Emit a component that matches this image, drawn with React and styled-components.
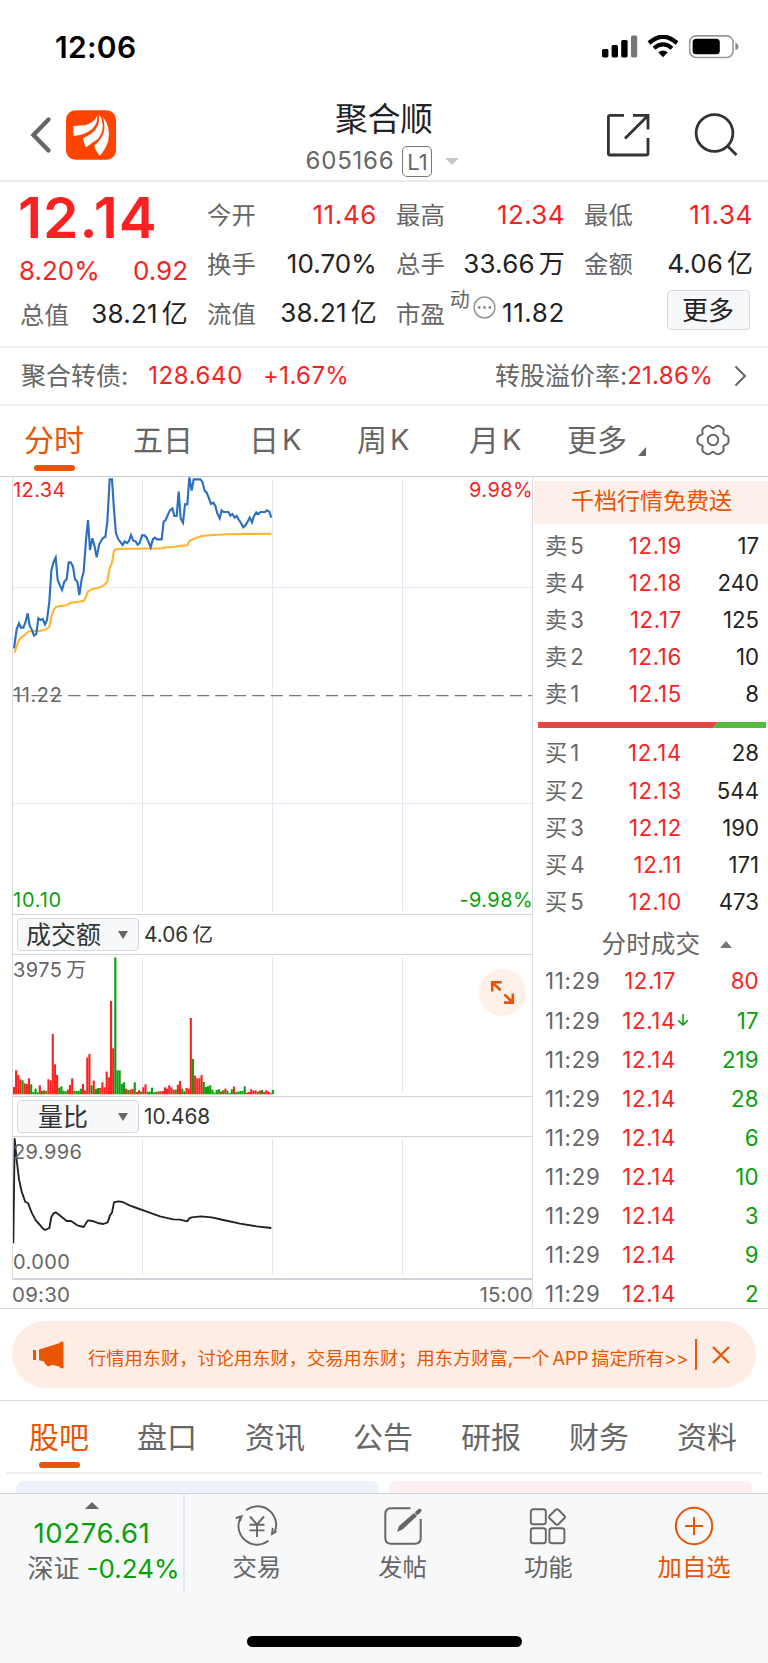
import React from "react";
import styled, { createGlobalStyle } from "styled-components";

const RED = "#f92222";
const GREEN = "#0a9f0a";
const ORANGE = "#ea5504";
const GREY = "#666666";
const DARK = "#222222";
const LINE = "#dadee5";

const GlobalStyle = createGlobalStyle`
  *, *::before, *::after { box-sizing: border-box; }
  body {
    margin: 0;
    background: #fff;
    color: ${DARK};
    font-family: Inter, "Noto Sans CJK SC", sans-serif;
    font-size: 24px;
    white-space: nowrap;
  }
  svg { display: block; flex: none; }
`;

const Screen = styled.div`
  width: 768px;
  height: 1663px;
  overflow: hidden;
  display: flex;
  flex-direction: column;
`;

/* ---------- status bar & header ---------- */

const StatusBar = styled.div`
  height: 94px;
  flex: none;
  display: flex;
  align-items: center;
  padding: 0 29px 0 55px;
`;

const Clock = styled.div`
  flex: 1;
  font-size: 30px;
  font-weight: 600;
  line-height: 40px;
  letter-spacing: 0.3px;
  color: #000;
`;

const Header = styled.header`
  height: 88px;
  flex: none;
  display: grid;
  grid-template-columns: 1fr auto 1fr;
  border-bottom: 2px solid #ebebeb;
`;

const HeaderLeft = styled.div`
  display: flex;
  gap: 14px;
  padding: 16px 0 0 29px;
`;

const HeaderRight = styled.div`
  display: flex;
  justify-content: flex-end;
  gap: 44px;
  padding: 18.6px 30.5px 0 0;
`;

const TitleBlock = styled.div`
  display: flex;
  flex-direction: column;
  align-items: center;
`;

const Title = styled.div`
  height: 48px;
  font-size: 32.7px;
  line-height: 50px;
`;

const CodeRow = styled.div`
  display: flex;
  align-items: center;
  height: 38px;
  padding-right: 3px;
  color: ${GREY};
  line-height: 38px;
  letter-spacing: 0.8px;
`;

const LevelBadge = styled.span`
  width: 30px;
  height: 31px;
  margin: 0 13px 0 8px;
  border: 1px solid #777;
  border-radius: 5px;
  font-size: 22px;
  line-height: 30px;
  letter-spacing: 0;
  text-align: center;
`;

/* ---------- quote ---------- */

const Quote = styled.section`
  height: 166px;
  flex: none;
  display: grid;
  grid-template-columns: 167px 169px 168px 168px;
  column-gap: 20px;
  padding: 8px 0 0 20px;
  border-bottom: 2px solid #efefef;
`;

const QuoteColumn = styled.div`
  display: flex;
  flex-direction: column;
`;

const Price = styled.div`
  height: 58px;
  margin-left: -2px;
  line-height: 55px;
  font-size: 57px;
  font-weight: 600;
  letter-spacing: 1px;
  color: ${RED};
`;

const Change = styled.div`
  height: 46px;
  line-height: 46px;
  display: flex;
  justify-content: space-between;
  margin: 0 -1px;
  font-size: 26px;
  color: ${RED};
`;

const Stat = styled.div`
  height: ${(p) => p.$height || 49.3}px;
  display: flex;
  align-items: center;
  justify-content: space-between;
`;

const StatLabel = styled.span`
  display: flex;
  align-items: center;
  padding-top: 1px;
  font-size: 24.4px;
  line-height: 36px;
  color: ${GREY};
`;

const StatValue = styled.span`
  display: flex;
  gap: ${(p) => p.$gap || 0}px;
  margin-right: -1px;
  font-size: 26px;
  line-height: 36px;
  letter-spacing: ${(p) => p.$ls || 0}px;
  color: ${(p) => (p.$red ? RED : DARK)};
`;

const Superscript = styled.sup`
  margin: -27px 3px 0 5px;
  font-size: 20px;
  line-height: 22px;
`;

const RaisedIcon = styled.span`
  margin-top: -12px;
`;

const MoreButton = styled.button`
  width: 83px;
  height: 40px;
  margin: 1px 2px 0 auto;
  padding: 0 1px 0 0;
  border: 1px solid #d5dae2;
  border-radius: 4px;
  background: #f7f8fa;
  color: ${DARK};
  font: inherit;
  font-size: 26px;
  line-height: 39px;
`;

const BondRow = styled.section`
  height: 58px;
  flex: none;
  display: flex;
  align-items: center;
  padding: 0 21px 0 21px;
  border-bottom: 2px solid #efefef;
  font-size: 25px;
  line-height: 36px;
  color: ${GREY};
`;

const BondValue = styled.span`
  color: ${RED};
  font-size: 24px;
  letter-spacing: ${(p) => p.$ls}px;
  margin-left: ${(p) => p.$ml || 0}px;
  margin-right: ${(p) => p.$mr || 0}px;
`;

const Spacer = styled.span`
  flex: 1;
`;

/* ---------- tabs ---------- */

const ChartTabs = styled.nav`
  height: 71px;
  flex: none;
  display: flex;
  border-bottom: 1px solid #c9ced6;
  padding-left: 24px;
`;

const Tab = styled.div`
  width: ${(p) => p.$width}px;
  height: 100%;
  flex: none;
  display: flex;
  flex-direction: column;
  align-items: flex-start;
  font-size: 30px;
  line-height: 68px;
  color: ${(p) => (p.$active ? ORANGE : GREY)};
  &::after {
    content: "";
    display: ${(p) => (p.$active ? "block" : "none")};
    width: 41px;
    height: 6px;
    margin: -9px 0 0 10px;
    border-radius: 3px;
    background: ${ORANGE};
  }
`;

const TabText = styled.span`
  display: flex;
  align-items: center;
  gap: 3px;
`;

const TabLetter = styled.span`
  font-size: 29px;
`;

const CornerMark = styled.span`
  margin: 22px 0 0 8px;
`;

const GearBox = styled.div`
  padding-top: 17px;
`;

/* ---------- charts ---------- */

const Market = styled.section`
  height: 832px;
  flex: none;
  display: flex;
  border-bottom: 1px solid ${LINE};
`;

const Charts = styled.div`
  width: 533px;
  padding-left: 12px;
  border-right: 1px solid ${LINE};
`;

const Panel = styled.div`
  position: relative;
  height: ${(p) => p.$height}px;
  border-left: 1px solid ${LINE};
  border-bottom: ${(p) => p.$rule || 1}px solid #cfd4db;
`;

const AxisLabel = styled.span`
  position: absolute;
  ${(p) => (p.$right ? "right: -1px" : "left: 0")};
  top: ${(p) => p.$top}px;
  font-size: 20px;
  line-height: 24px;
  letter-spacing: ${(p) => p.$ls || 0.4}px;
  color: ${(p) => p.$color || GREY};
`;

const PanelBar = styled.div`
  height: ${(p) => p.$height}px;
  display: flex;
  align-items: center;
  gap: 5px;
  padding-left: 4px;
  border-bottom: 1px solid #cfd4db;
  border-left: 1px solid ${LINE};
  font-size: 20.8px;
  line-height: 30px;
  color: #333;
`;

const Select = styled.div`
  width: 122px;
  height: 33px;
  display: flex;
  align-items: center;
  justify-content: space-between;
  padding: 0 10px 0 ${(p) => p.$indent}px;
  border: 1px solid #d5dae2;
  border-radius: 4px;
  background: #f7f8fa;
  font-size: 25px;
  line-height: 30px;
`;

const ValueWithUnit = styled.span`
  display: flex;
  gap: 4px;
`;

const Expand = styled.button`
  position: absolute;
  right: 6px;
  top: 14px;
  width: 47px;
  height: 47px;
  padding: 0;
  border: 0;
  border-radius: 50%;
  background: #fff0e9;
`;

const TimeAxis = styled.div`
  height: 29px;
  display: flex;
  justify-content: space-between;
  margin-right: -1px;
  font-size: 20.5px;
  line-height: 30px;
  letter-spacing: 0.2px;
  color: ${GREY};
`;

/* ---------- order book ---------- */

const Book = styled.div`
  flex: 1;
  padding: 4px 0 0 1px;
`;

const Promo = styled.div`
  height: 43px;
  padding-left: 1px;
  background: #fdf0ea;
  color: ${ORANGE};
  font-size: 23px;
  line-height: 40px;
  text-align: center;
`;

const Level = styled.div`
  height: 37.1px;
  display: grid;
  grid-template-columns: 81px 56px 1fr;
  padding: 0 9px 0 11px;
  font-size: 22.2px;
  line-height: 37px;
  color: ${GREY};
  text-align: right;
`;

const LevelName = styled.span`
  display: flex;
  gap: 3px;
`;

const Levels = styled.div`
  padding-top: ${(p) => p.$top}px;
`;

const Num = styled.span`
  color: ${(p) => p.$color};
  letter-spacing: ${(p) => p.$ls || 0}px;
`;

const Depth = styled.div`
  margin: 10px 1px 0 4px;
`;

const TradesTitle = styled.div`
  height: 33px;
  display: flex;
  align-items: center;
  justify-content: flex-end;
  gap: 20px;
  margin-top: 8.5px;
  padding-right: 36px;
  font-size: 24.6px;
  line-height: 33px;
  color: ${GREY};
`;

const Trade = styled.div`
  height: 39.1px;
  display: grid;
  grid-template-columns: 77px 54px 18px 1fr;
  align-items: center;
  padding: 0 9.5px 0 11px;
  font-size: 22.3px;
  line-height: 39px;
  color: ${GREY};
`;

const TradeTime = styled.span`
  letter-spacing: 0.7px;
`;

const TradeNum = styled(Num)`
  text-align: right;
`;

const TickMark = styled.span`
  padding-left: 1px;
`;

/* ---------- lower part ---------- */

const Notice = styled.div`
  height: 67px;
  flex: none;
  display: flex;
  align-items: center;
  margin: 12px;
  padding: 0 26px 0 20px;
  border-radius: 33.5px;
  background: #fdede5;
  color: ${ORANGE};
  font-size: 18.25px;
`;

const NoticeText = styled.span`
  flex: 1;
  padding: 6px 0 0 24px;
  line-height: 30px;
  word-spacing: -2.2px;
`;

const NoticeDivider = styled.span`
  width: 2px;
  height: 31px;
  margin-right: 15px;
  background: ${ORANGE};
`;

const InfoTabs = styled.nav`
  height: 72px;
  flex: none;
  display: flex;
  border-top: 1px solid ${LINE};
  padding: 1.5px 0 0 29px;
`;

const CardStrip = styled.div`
  height: 21px;
  flex: none;
  margin: 0 6px;
  padding: 7px 10px 0 10px;
  border-top: 2px solid #efefef;
  display: flex;
  gap: 10px;
`;

const Card = styled.div`
  flex: 1;
  border-radius: 7px 7px 0 0;
  background: ${(p) => p.$color};
`;

const Footer = styled.footer`
  flex: 1;
  background: #f7f8fa;
  border-top: 1px solid #cdd3db;
  display: flex;
  flex-direction: column;
  align-items: center;
`;

const NavRow = styled.div`
  width: 100%;
  height: 100px;
  display: flex;
`;

const IndexBox = styled.div`
  width: 185px;
  height: 99px;
  display: flex;
  flex-direction: column;
  align-items: center;
  border-right: 2px solid #e6e8ec;
  padding: 8px 0 0 1px;
  color: ${GREEN};
`;

const IndexValue = styled.div`
  margin-top: 6px;
  font-size: 27.5px;
  line-height: 36px;
  letter-spacing: 0.6px;
`;

const IndexChange = styled.div`
  display: flex;
  gap: 7px;
  padding-left: 23px;
  font-size: 26px;
  line-height: 36px;
`;

const IndexName = styled.span`
  color: ${GREY};
`;

const NavItem = styled.div`
  width: 145.8px;
  display: flex;
  flex-direction: column;
  align-items: center;
  padding: 10px 2px 0 0;
  color: ${(p) => (p.$accent ? ORANGE : GREY)};
  font-size: 24.4px;
  line-height: 36px;
  gap: 1px;
`;

const HomeIndicator = styled.div`
  width: 275px;
  height: 11px;
  margin-top: 42px;
  border-radius: 6px;
  background: #000;
`;

/* ---------- icons ---------- */

const SignalIcons = () => (
  <svg width="137" height="24" viewBox="0 0 137 24">
    <rect x="0" y="14" width="6.4" height="8.4" rx="1.6" />
    <rect x="9.6" y="10" width="6.4" height="12.4" rx="1.6" />
    <rect x="19.2" y="5" width="6.4" height="17.4" rx="1.6" />
    <rect x="29" y="0.4" width="6.2" height="22" rx="1.6" fill="#777" />
    <path d="M47 8Q61 -4.5 75 8" fill="none" stroke="#000" strokeWidth="4.4" />
    <path d="M52 13.2Q61 5.6 70 13.2" fill="none" stroke="#000" strokeWidth="4" />
    <path d="M56.2 17.2Q61 13.6 65.8 17.2L61 22.2Z" />
    <rect x="87.7" y="0.9" width="43.4" height="21.6" rx="6.5" fill="none" stroke="#999" strokeWidth="1.6" />
    <rect x="90.6" y="3.8" width="27.2" height="15.4" rx="3.5" />
    <path d="M133.4 7.6Q136.6 9 136.6 11.4T133.4 15.3Z" fill="#888" />
  </svg>
);

const BackIcon = () => (
  <svg width="23" height="50" viewBox="0 0 23 50" fill="none" stroke="#666" strokeWidth="4.4" strokeLinecap="round" strokeLinejoin="miter">
    <path d="M19.5 9.5L4.5 25L19.5 40.5" />
  </svg>
);

const Logo = () => (
  <svg width="50" height="50" viewBox="0 0 149 148">
    <rect width="149" height="148" rx="28" fill="#ff4400" />
    <g fill="#fff">
      <path d="M93 17Q84 38 56 45L22 47Q20 62 23 77Q54 75 78 56Q96 38 93 17Z" />
      <path d="M98 14Q104 50 75 70Q62 79 51 83Q53 99 59 111Q76 98 96 85Q116 60 106 27Q103 18 98 14Z" />
      <path d="M109 18Q123 60 103 85Q94 98 84 105Q88 120 100 136Q118 118 126 91Q134 50 109 18Z" />
    </g>
  </svg>
);

const ShareIcon = () => (
  <svg width="44" height="44" viewBox="0 0 44 44" fill="none" stroke="#333" strokeWidth="2.8">
    <path d="M18 2.4H4Q2.4 2.4 2.4 4V40.4Q2.4 42 4 42H40Q42 42 42 40.4V25" />
    <path d="M27 2.4H42V16.5M42 2.4L19 25.5" />
  </svg>
);

const SearchIcon = () => (
  <svg width="44" height="44" viewBox="0 0 44 44" fill="none" stroke="#333" strokeWidth="2.8">
    <circle cx="20.5" cy="20" r="18.4" />
    <path d="M33.5 33L42.5 42" />
  </svg>
);

const Triangle = ({ w, h, up, color = GREY }) => (
  <svg width={w} height={h} viewBox="0 0 10 10" preserveAspectRatio="none">
    <path d={up ? "M0 10L5 0L10 10Z" : "M0 0H10L5 10Z"} fill={color} />
  </svg>
);

const DotsIcon = () => (
  <svg width="23" height="23" viewBox="0 0 23 23">
    <circle cx="11.5" cy="11.5" r="10.4" fill="none" stroke="#999" strokeWidth="1.5" />
    {[6.2, 11.5, 16.8].map((x) => (
      <circle key={x} cx={x} cy="11.5" r="1.4" fill="#888" />
    ))}
  </svg>
);

const ChevronRight = () => (
  <svg width="13" height="22" viewBox="0 0 13 22" fill="none" stroke="#666" strokeWidth="2">
    <path d="M1.5 1.5L11 11L1.5 20.5" />
  </svg>
);

const gearOutline = () => {
  const pts = [];
  for (let i = 0; i <= 180; i += 1) {
    const a = (i / 180) * Math.PI * 2;
    const r = 14 - 1.6 * Math.cos(6 * a) - 0.5 * Math.cos(12 * a);
    pts.push(`${(17 + r * Math.sin(a) * 1.03).toFixed(2)},${(17 - r * Math.cos(a)).toFixed(2)}`);
  }
  return pts.join(" ");
};

const GearIcon = () => (
  <svg width="34" height="34" viewBox="0 0 34 34" fill="none" stroke="#666" strokeWidth="2">
    <polygon points={gearOutline()} strokeLinejoin="round" />
    <circle cx="17" cy="17" r="5.2" />
  </svg>
);

const CornerIcon = () => (
  <svg width="8" height="9" viewBox="0 0 8 9">
    <path d="M8 0V9H0Z" fill="#666" />
  </svg>
);

const ExpandIcon = () => (
  <svg width="47" height="47" viewBox="0 0 47 47" fill="none" stroke={ORANGE} strokeWidth="2.6">
    <path d="M13.2 22.4V13.2H22.8M13.2 13.2L21.6 21.2" />
    <path d="M25 33.6H33.8V24.6M33.8 33.6L25.4 25.4" />
  </svg>
);

const DownArrow = () => (
  <svg width="12" height="14" viewBox="0 0 12 14" fill="none" stroke={GREEN} strokeWidth="1.5">
    <path d="M6 1V12M1.2 7.4L6 12L10.8 7.4" />
  </svg>
);

const Megaphone = () => (
  <svg width="32" height="28" viewBox="0 0 32 28" fill={ORANGE}>
    <rect x="1" y="9" width="3" height="10" />
    <path d="M7 8.4L28 2V0.7H31.5V27.3H28V25.7L20 23.8Q18 25.8 15.5 25Q13 24.2 12 20.6L7 19.3Z" />
  </svg>
);

const CloseIcon = () => (
  <svg width="18" height="18" viewBox="0 0 18 18" fill="none" stroke={ORANGE} strokeWidth="2.2">
    <path d="M1 1L17 17M17 1L1 17" />
  </svg>
);

const TradeIcon = () => (
  <svg width="44" height="44" viewBox="0 0 44 44" fill="none" stroke="#666" strokeWidth="1.9">
    <path d="M11 6.3A18.6 18.6 0 0 1 39.5 28.5L41.5 27.2M39.5 28.5L37 30L37.8 24" />
    <path d="M33.5 36.8A18.6 18.6 0 0 1 5 14.8L6.5 12.3L0.8 14M6.5 12.3L5 17" />
    <path d="M15 12.5L22 20.5L29 12.5M14.5 20.8H29.5M14.5 26.4H29.5M22 20.5V33" />
  </svg>
);

const PostIcon = () => (
  <svg width="44" height="44" viewBox="0 0 44 44" fill="none" stroke="#666" strokeWidth="2">
    <path d="M29.5 4.3H10Q4.3 4.3 4.3 10V34Q4.3 39.7 10 39.7H34Q39.7 39.7 39.7 34V15" />
    <path d="M16 28L18 22L33 9L36 12L21.5 25.5Z" fill="#666" stroke="none" />
    <path d="M36.2 8.8L38.6 6.6" strokeWidth="4" strokeLinecap="round" />
  </svg>
);

const AppsIcon = () => (
  <svg width="44" height="44" viewBox="0 0 44 44" fill="none" stroke="#666" strokeWidth="1.9">
    <rect x="4.8" y="5.2" width="15" height="15" rx="2.5" />
    <rect x="4.8" y="24.2" width="15" height="15" rx="2.5" />
    <rect x="23.4" y="24.2" width="15" height="15" rx="2.5" />
    <path d="M29.7 5.8Q31 4.4 32.3 5.8L38.6 12Q39.6 13 38.6 14L32.3 20.2Q31 21.6 29.7 20.2L23.4 14Q22.4 13 23.4 12Z" />
  </svg>
);

const AddIcon = () => (
  <svg width="44" height="44" viewBox="0 0 44 44" fill="none" stroke={ORANGE} strokeWidth="2">
    <circle cx="22" cy="22" r="18.2" />
    <path d="M22 13V31M13 22H31" />
  </svg>
);

/* ---------- chart data ---------- */

const priceLine =
  "42,535 50,478 57,460 63,473 70,473 76,458 83,430 89,467 95,478 102,497 109,492 115,445 121,450 128,447 135,463 141,450 148,395 154,303 160,278 167,263 173,330 180,347 186,360 193,335 200,328 206,277 212,277 219,290 225,328 232,335 238,375 245,328 251,305 258,210 264,150 270,240 277,205 284,230 290,262 297,225 303,213 310,203 316,201 322,155 329,28 336,28 342,120 348,190 355,208 362,217 368,225 374,214 381,219 387,213 393,195 400,212 407,214 413,224 419,219 426,196 433,196 440,203 446,217 452,232 459,207 465,203 471,208 485,208 491,155 497,150 504,133 510,121 517,115 523,138 530,138 536,65 542,145 549,158 555,103 562,103 568,22 575,62 581,28 601,28 607,35 614,62 620,68 627,85 633,102 640,98 646,108 652,130 659,145 665,121 671,126 685,126 691,137 697,132 704,143 710,138 717,150 724,161 730,172 737,165 743,155 749,143 756,157 762,138 769,127 775,132 782,126 795,126 801,121 808,125 814,143";
const averageLine =
  "42,545 45,545 50,527 57,510 65,501 76,494 85,484 100,484 120,482 135,480 148,471 154,440 160,422 168,411 180,408 200,406 212,398 235,395 252,392 258,380 264,365 275,358 295,353 310,347 322,335 329,295 336,278 342,242 350,237 485,235 500,232 525,231 535,228 562,226 568,214 580,207 605,198 640,195 680,193 814,191";
const ratioLine =
  "40,430 44,117 50,180 57,238 65,275 76,306 84,309 95,338 108,362 120,375 128,385 135,390 148,384 154,351 160,341 167,337 178,345 200,363 213,363 232,376 251,381 258,370 264,361 277,363 293,369 310,372 323,367 330,346 336,338 342,307 355,304 368,306 390,317 410,324 430,331 480,349 520,358 540,359 562,364 568,355 575,352 603,349 635,352 670,360 720,371 770,379 814,384";

const volumes =
  "22r 72r 58r 45r 42g 33r 31r 48r 30g 7g 17g 6g 27r 10g 12r 10g 45r 42r 181r 90r 58r 20g 24g 11g 9g 14r 28r 48r 11g 10g 10g 17g 31r 12r 110r 121r 27g 41r 16g 19g 19r 36r 21r 68r 51r 280r 138r 411g 72g 72g 31g 36g 17r 13g 14r 16r 36g 7r 12r 8g 21r 30r 8g 8g 20g 6g 7r 9g 9r 10r 21r 17r 27r 21r 14r 14g 29r 40r 17g 9g 19r 17r 229r 106g 56r 48r 48r 58r 37g 22g 24g 27g 14g 5g 13g 15g 8r 12g 17r 11g 4g 15g 23r 6g 8g 10g 10g 24g 5r 7r 15r 11r 12r 8g 11r 13g 7r 12r 8r 4r 13g"
    .split(" ")
    .map((v) => ({ value: parseInt(v, 10), rise: v.endsWith("r") }));

const Grid = ({ height, rows = [] }) => (
  <g stroke="#e3e7f0" strokeWidth="1">
    {[129.5, 259.5, 389.5].map((x) => (
      <path key={x} d={`M${x} 2.5V${height - 2.5}`} />
    ))}
    {rows.map((y) => (
      <path key={y} d={`M0 ${y}H519`} />
    ))}
  </g>
);

const PriceChart = () => (
  <svg width="519" height="437" viewBox="0 0 519 437">
    <Grid height={437} rows={[110.5, 326.5]} />
    <path d="M0 218.7H519" stroke="#777" strokeWidth="1.2" strokeDasharray="12.3 6.1" />
    <g transform="translate(-13 -7) scale(0.33333)" fill="none" strokeLinejoin="round">
      <polyline points={averageLine} stroke="#ffb32d" strokeWidth="6.2" />
      <polyline points={priceLine} stroke="#2c6fbf" strokeWidth="6.4" strokeLinejoin="miter" />
    </g>
  </svg>
);

const VolumeChart = () => (
  <svg width="519" height="141" viewBox="0 0 519 141">
    <Grid height={141} />
    {volumes.map((v, i) => (
      <rect
        key={i}
        x={-0.1 + i * 2.157}
        y={139.3 - v.value / 3}
        width="2.1"
        height={v.value / 3}
        fill={v.rise ? RED : GREEN}
      />
    ))}
  </svg>
);

const RatioChart = () => (
  <svg width="519" height="141" viewBox="0 0 519 141">
    <Grid height={141} />
    <g transform="translate(-13 -37) scale(0.33333)">
      <polyline points={ratioLine} fill="none" stroke="#222" strokeWidth="5.6" strokeLinejoin="round" />
    </g>
  </svg>
);

const DepthBar = () => (
  <svg width="228" height="6" viewBox="0 0 228 6">
    <path d="M0 0H180L175 6H0Z" fill="#e94545" />
    <path d="M180 0H228V6H175Z" fill="#55b93f" />
  </svg>
);

const sells = [
  ["5", "12.19", "17"],
  ["4", "12.18", "240"],
  ["3", "12.17", "125"],
  ["2", "12.16", "10"],
  ["1", "12.15", "8"],
];
const buys = [
  ["1", "12.14", "28"],
  ["2", "12.13", "544"],
  ["3", "12.12", "190"],
  ["4", "12.11", "171"],
  ["5", "12.10", "473"],
];
const trades = [
  ["12.17", "80", true],
  ["12.14", "17", false, true],
  ["12.14", "219"],
  ["12.14", "28"],
  ["12.14", "6"],
  ["12.14", "10"],
  ["12.14", "3"],
  ["12.14", "9"],
  ["12.14", "2"],
];

const LevelRow = ({ side, row }) => (
  <Level>
    <LevelName>
      <span>{side}</span>
      <span>{row[0]}</span>
    </LevelName>
    <Num $color={RED} $ls={0.7}>{row[1]}</Num>
    <Num $color={DARK}>{row[2]}</Num>
  </Level>
);

const StatItem = ({ label, value, unit, ls, red, height }) => (
  <Stat $height={height}>
    <StatLabel>{label}</StatLabel>
    <StatValue $red={red} $gap={unit ? 4 : 0} $ls={ls}>
      <span>{value}</span>
      {unit && <span>{unit}</span>}
    </StatValue>
  </Stat>
);

export default function App() {
  return (
    <Screen>
      <GlobalStyle />
      <StatusBar>
        <Clock>12:06</Clock>
        <SignalIcons />
      </StatusBar>
      <Header>
        <HeaderLeft>
          <BackIcon />
          <Logo />
        </HeaderLeft>
        <TitleBlock>
          <Title>聚合顺</Title>
          <CodeRow>
            605166
            <LevelBadge>L1</LevelBadge>
            <Triangle w={14} h={7} color="#c8c8c8" />
          </CodeRow>
        </TitleBlock>
        <HeaderRight>
          <ShareIcon />
          <SearchIcon />
        </HeaderRight>
      </Header>

      <Quote>
        <QuoteColumn>
          <Price>12.14</Price>
          <Change>
            <span>8.20%</span>
            <span>0.92</span>
          </Change>
          <StatItem label="总值" value="38.21" unit="亿" ls={0.2} height={40} />
        </QuoteColumn>
        <QuoteColumn>
          <StatItem label="今开" value="11.46" ls={0.6} red />
          <StatItem label="换手" value="10.70%" ls={0.1} />
          <StatItem label="流值" value="38.21" unit="亿" ls={0.2} />
        </QuoteColumn>
        <QuoteColumn>
          <StatItem label="最高" value="12.34" ls={0.4} red />
          <StatItem label="总手" value="33.66" unit="万" ls={0.2} />
          <Stat>
            <StatLabel>
              市盈
              <Superscript>动</Superscript>
              <RaisedIcon>
                <DotsIcon />
              </RaisedIcon>
            </StatLabel>
            <StatValue $ls={0.6}>11.82</StatValue>
          </Stat>
        </QuoteColumn>
        <QuoteColumn>
          <StatItem label="最低" value="11.34" ls={0.6} red />
          <StatItem label="金额" value="4.06" unit="亿" ls={0.1} />
          <MoreButton>更多</MoreButton>
        </QuoteColumn>
      </Quote>

      <BondRow>
        聚合转债:
        <BondValue $ml={20} $ls={0.6}>128.640</BondValue>
        <BondValue $ml={20} $ls={0.4}>+1.67%</BondValue>
        <Spacer />
        转股溢价率:
        <BondValue $mr={21} $ls={0.3}>21.86%</BondValue>
        <ChevronRight />
      </BondRow>

      <ChartTabs>
        <Tab $width={109} $active>分时</Tab>
        <Tab $width={116}>五日</Tab>
        <Tab $width={108}>
          <TabText><span>日</span><TabLetter>K</TabLetter></TabText>
        </Tab>
        <Tab $width={112}>
          <TabText><span>周</span><TabLetter>K</TabLetter></TabText>
        </Tab>
        <Tab $width={98}>
          <TabText><span>月</span><TabLetter>K</TabLetter></TabText>
        </Tab>
        <Tab $width={129}>
          <TabText>
            更多
            <CornerMark>
              <CornerIcon />
            </CornerMark>
          </TabText>
        </Tab>
        <GearBox>
          <GearIcon />
        </GearBox>
      </ChartTabs>

      <Market>
        <Charts>
          <Panel $height={438}>
            <PriceChart />
            <AxisLabel $top={1} $color={RED}>12.34</AxisLabel>
            <AxisLabel $top={1} $color={RED} $right>9.98%</AxisLabel>
            <AxisLabel $top={206} $ls={0.6}>11.22</AxisLabel>
            <AxisLabel $top={411} $ls={0.8} $color={GREEN}>10.10</AxisLabel>
            <AxisLabel $top={411} $color={GREEN} $right>-9.98%</AxisLabel>
          </Panel>
          <PanelBar $height={40}>
            <Select $indent={8}>
              成交额
              <Triangle w={10} h={8} />
            </Select>
            <ValueWithUnit><span>4.06</span><span>亿</span></ValueWithUnit>
          </PanelBar>
          <Panel $height={142}>
            <VolumeChart />
            <AxisLabel $top={3}>
              <ValueWithUnit><span>3975</span><span>万</span></ValueWithUnit>
            </AxisLabel>
            <Expand>
              <ExpandIcon />
            </Expand>
          </Panel>
          <PanelBar $height={40}>
            <Select $indent={20}>
              量比
              <Triangle w={10} h={8} />
            </Select>
            10.468
          </PanelBar>
          <Panel $height={143} $rule={2}>
            <RatioChart />
            <AxisLabel $top={3}>29.996</AxisLabel>
            <AxisLabel $top={113}>0.000</AxisLabel>
          </Panel>
          <TimeAxis>
            <span>09:30</span>
            <span>15:00</span>
          </TimeAxis>
        </Charts>
        <Book>
          <Promo>千档行情免费送</Promo>
          <Levels $top={2.5}>
            {sells.map((r) => (
              <LevelRow key={r[0]} side="卖" row={r} />
            ))}
          </Levels>
          <Depth>
            <DepthBar />
          </Depth>
          <Levels $top={6.5}>
            {buys.map((r) => (
              <LevelRow key={r[0]} side="买" row={r} />
            ))}
          </Levels>
          <TradesTitle>
            分时成交
            <Triangle w={12} h={7} up color="#777" />
          </TradesTitle>
          {trades.map(([price, volume, rise, falling], i) => (
            <Trade key={i}>
              <TradeTime>11:29</TradeTime>
              <TradeNum $color={RED} $ls={0.6}>{price}</TradeNum>
              <TickMark>{falling && <DownArrow />}</TickMark>
              <TradeNum $color={rise ? RED : GREEN}>{volume}</TradeNum>
            </Trade>
          ))}
        </Book>
      </Market>

      <Notice>
        <Megaphone />
        <NoticeText>行情用东财，讨论用东财，交易用东财；用东方财富,一个 APP 搞定所有&gt;&gt;</NoticeText>
        <NoticeDivider />
        <CloseIcon />
      </Notice>

      <InfoTabs>
        <Tab $width={108} $active>股吧</Tab>
        {["盘口", "资讯", "公告", "研报", "财务", "资料"].map((t) => (
          <Tab key={t} $width={108}>{t}</Tab>
        ))}
      </InfoTabs>
      <CardStrip>
        <Card $color="#edf2fb" />
        <Card $color="#fef0f2" />
      </CardStrip>

      <Footer>
        <NavRow>
          <IndexBox>
            <Triangle w={14} h={7} up />
            <IndexValue>10276.61</IndexValue>
            <IndexChange>
              <IndexName>深证</IndexName>
              <span>-0.24%</span>
            </IndexChange>
          </IndexBox>
          <NavItem><TradeIcon />交易</NavItem>
          <NavItem><PostIcon />发帖</NavItem>
          <NavItem><AppsIcon />功能</NavItem>
          <NavItem $accent><AddIcon />加自选</NavItem>
        </NavRow>
        <HomeIndicator />
      </Footer>
    </Screen>
  );
}
